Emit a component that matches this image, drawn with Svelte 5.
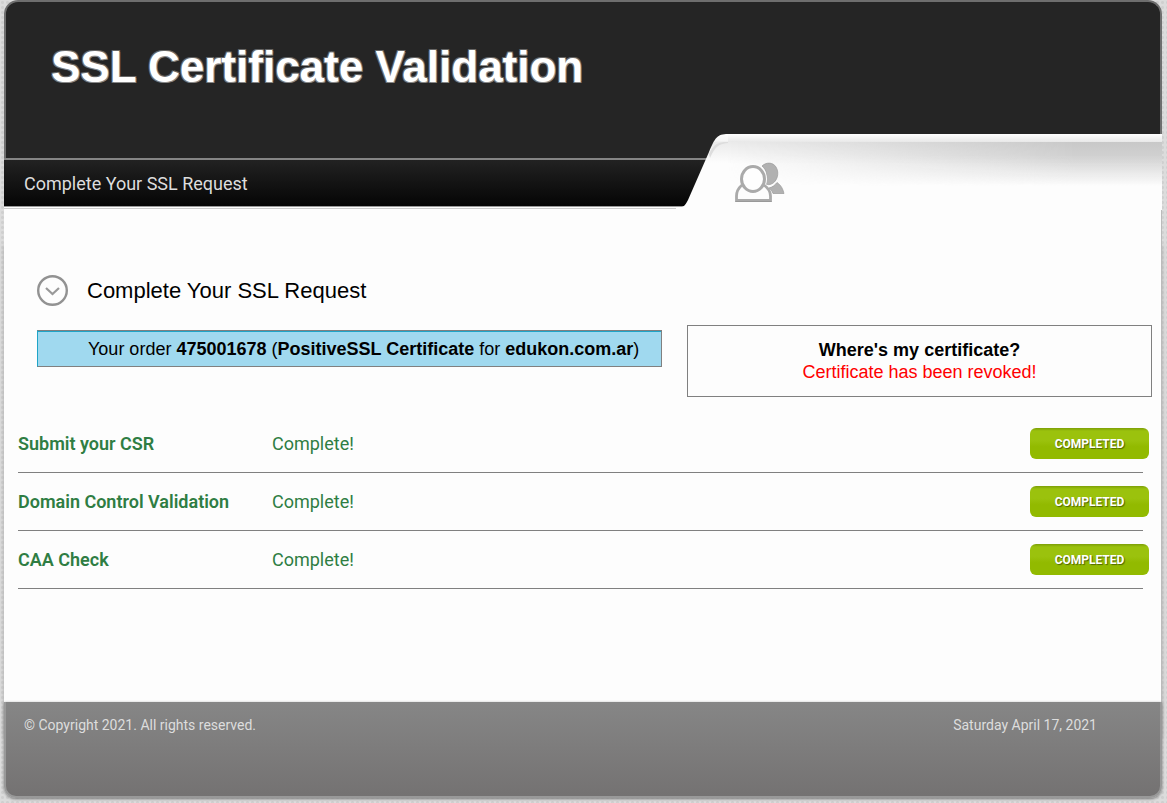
<script>
  const steps = [
    { name: 'Submit your CSR', status: 'Complete!' },
    { name: 'Domain Control Validation', status: 'Complete!' },
    { name: 'CAA Check', status: 'Complete!' }
  ];
</script>

<div class="page">
  <header>
    <div class="banner">
      <h1>SSL Certificate Validation</h1>
    </div>
    <nav>Complete Your SSL Request</nav>
    <div class="tab">
      <svg class="slant" width="52" height="76" viewBox="0 0 52 76" aria-hidden="true">
        <defs>
          <linearGradient id="sheen" x1="0" y1="0" x2="0" y2="1">
            <stop offset="0" stop-color="#fff" />
            <stop offset=".09" stop-color="#f6f6f6" />
            <stop offset=".11" stop-color="#ebebeb" />
            <stop offset=".38" stop-color="#fdfdfd" />
          </linearGradient>
        </defs>
        <path d="M0 76V74C7 74 9 72 12 66L33 18C39 4 41 0 52 0V76Z" fill="url(#sheen)" />
        <path d="M33 20C38 10 41 8 52 8V9C42 10 39 13 34 24Z" fill="#ddd" />
      </svg>
      <div class="tab-body">
        <svg class="users" width="52" height="42" viewBox="0 0 52 42" aria-hidden="true">
          <path d="M28 4C32 0 39 0 42 5C46 11 43 21 36 22.500C34 23 32 22 31 21.500C34 15 33 8 28 4Z" fill="#b1b1b1" stroke="#999" stroke-width=".7" />
          <path d="M35 26C39 25 41 23 43 20.500C47 23 49 27 50 31.500H39C38 29 37 27.500 35 26Z" fill="#b1b1b1" stroke="#999" stroke-width=".7" />
          <ellipse cx="19" cy="17" rx="12.500" ry="13.500" fill="#fdfdfd" stroke="#fdfdfd" stroke-width="3" />
          <path d="M8 23C4.500 26 2.500 30 2.500 34V38.500H36.500V34C36.500 30 34 26 30 23" fill="#fdfdfd" stroke="#aaa" stroke-width="2.800" />
          <path d="M1.500 39.500H37.500" stroke="#999" />
          <ellipse cx="19" cy="17" rx="11.500" ry="12.500" fill="#fefefe" stroke="#aaa" stroke-width="3" />
        </svg>
      </div>
    </div>
  </header>

  <main>
    <div class="heading">
      <svg width="32" height="32" viewBox="0 0 32 32" aria-hidden="true">
        <circle cx="15.500" cy="15.500" r="14.300" fill="none" stroke="#929292" stroke-width="2.400" />
        <path d="M9 13L15.500 19L22 13" fill="none" stroke="#999" stroke-width="2.200" />
      </svg>
      <h2>Complete Your SSL Request</h2>
    </div>

    <div class="summary">
      <p class="order">Your order <b>475001678</b> (<b>PositiveSSL Certificate</b> for <b>edukon.com.ar</b>)</p>
      <div class="where">
        <b>Where's my certificate?</b>
        <span>Certificate has been revoked!</span>
      </div>
    </div>

    <ul>
      {#each steps as step}
        <li>
          <strong>{step.name}</strong>
          <span>{step.status}</span>
          <button type="button">COMPLETED</button>
        </li>
      {/each}
    </ul>
  </main>

  <footer>
    <span>© Copyright 2021. All rights reserved.</span>
    <span>Saturday April 17, 2021</span>
  </footer>
</div>

<style>
  :global(body) {
    background-color: #dcdcdc;
    background-image: radial-gradient(#cfcfcf 1px, transparent 2px);
    background-size: 5px 5px;
  }
  .page {
    display: flex;
    flex-direction: column;
    box-sizing: border-box;
    min-height: 100vh;
    padding: 0 5px 5px 4px;
    font-family: Roboto, sans-serif;
  }
  header {
    display: grid;
    grid-template-columns: 58fr 42fr;
    grid-template-rows: 134px 24px 52px;
    background: #fdfdfd;
    border-radius: 14px 14px 0 0;
    position: relative;
  }
  .banner {
    grid-area: 1 / 1 / 3 / 3;
    box-sizing: border-box;
    padding: 41px 45px 0;
    background: #252525;
    border: 2px solid #6e6e6e;
    border-bottom: 0;
    border-radius: 14px 14px 0 0;
  }
  h1 {
    margin: 0;
    font: bold 44px/48px "Liberation Sans", Arial, sans-serif;
    color: #fff;
    text-shadow: 1px 1px 0 #888, -1px -1px 0 #666, 1px -1px 0 #666, -1px 1px 0 #777;
  }
  nav {
    grid-area: 3 / 1 / 4 / 3;
    align-self: start;
    height: 46px;
    border-top: 2px solid #858585;
    border-bottom: 1px solid #999;
    padding-left: 20px;
    background: linear-gradient(#222, #050505);
    box-shadow: 0 1px #fdfdfd, 0 2px #ccc;
    color: #ddd;
    font-size: 18px;
    line-height: 48px;
  }
  .tab {
    grid-area: 2 / 2 / 4 / 3;
    display: flex;
  }
  .slant {
    flex: none;
  }
  .tab-body {
    flex: 1;
    background:
      linear-gradient(#fff, #e8e8e8) 0 0 / 100% 8px no-repeat,
      linear-gradient(#ebebeb 8px, #fdfdfd 30px);
    position: relative;
  }
  .tab-body::before {
    content: "";
    position: absolute;
    inset: 8px 0 24px;
    background: linear-gradient(#c8c8c8, #d0d0d0 30%, #c8c8c800);
    mask-image: linear-gradient(90deg, transparent, #000 80%);
  }
  .users {
    position: relative;
    display: block;
    margin: 28px 0 0 6px;
  }
  main {
    flex: 1;
    background: #fdfdfd;
    border-right: 1px solid #bbb;
    box-shadow: 0 36px 4px #aaa;
    padding: 65px 9px 0 14px;
  }
  .heading {
    display: flex;
    align-items: center;
    gap: 18px;
    padding-left: 19px;
  }
  h2 {
    margin: 0;
    font: 22px/32px "Liberation Sans", Arial, sans-serif;
    color: #000;
  }
  .summary {
    display: grid;
    grid-template-columns: 625fr 465fr;
    gap: 25px;
    align-items: start;
    margin: 18px 0 0 19px;
    font: 18px/22px "Liberation Sans", Arial, sans-serif;
    color: #000;
  }
  .order {
    margin: 5px 0 0;
    padding: 7px 10px 6px 50px;
    border: 1px solid #808080;
    border-left-color: #1fa5c8;
    box-shadow: inset 0 1px #1fa5c8;
    background: #a0d9ef;
  }
  .where {
    display: flex;
    flex-direction: column;
    align-items: center;
    padding: 13px;
    border: 1px solid #808080;
  }
  .where span {
    color: #f00;
  }
  ul {
    list-style: none;
    margin: 18px 0 0;
    padding: 0;
  }
  li {
    display: grid;
    grid-template-columns: 254px 1fr 119px;
    align-items: center;
    box-sizing: border-box;
    height: 58px;
    padding: 0 3px 2px 0;
    font-size: 18px;
    color: #2f7d43;
    background: linear-gradient(#808080, #808080) 0 100% / calc(100% - 9px) 1px no-repeat;
  }
  strong {
    font-weight: 600;
  }
  button {
    height: 31px;
    padding: 2px 0 0;
    border: 0;
    border-radius: 6px;
    background: linear-gradient(#7d9f08, #9bc20d 3px, #9bc20d 40%, #92ba00 60%);
    color: #fff;
    font: bold 12px/16px Roboto, sans-serif;
    text-shadow: 1px 1px 1px #4f6600;
  }
  footer {
    display: flex;
    justify-content: space-between;
    box-sizing: border-box;
    height: 96px;
    padding: 13px 63px 0 18px;
    border: solid #999;
    border-width: 0 2px 2px;
    border-radius: 0 0 12px 12px;
    background: linear-gradient(#868686, #747272);
    box-shadow: 0 1px 3px #777;
    color: #ddd;
    font-size: 14px;
    line-height: 20px;
    position: relative;
  }
</style>
